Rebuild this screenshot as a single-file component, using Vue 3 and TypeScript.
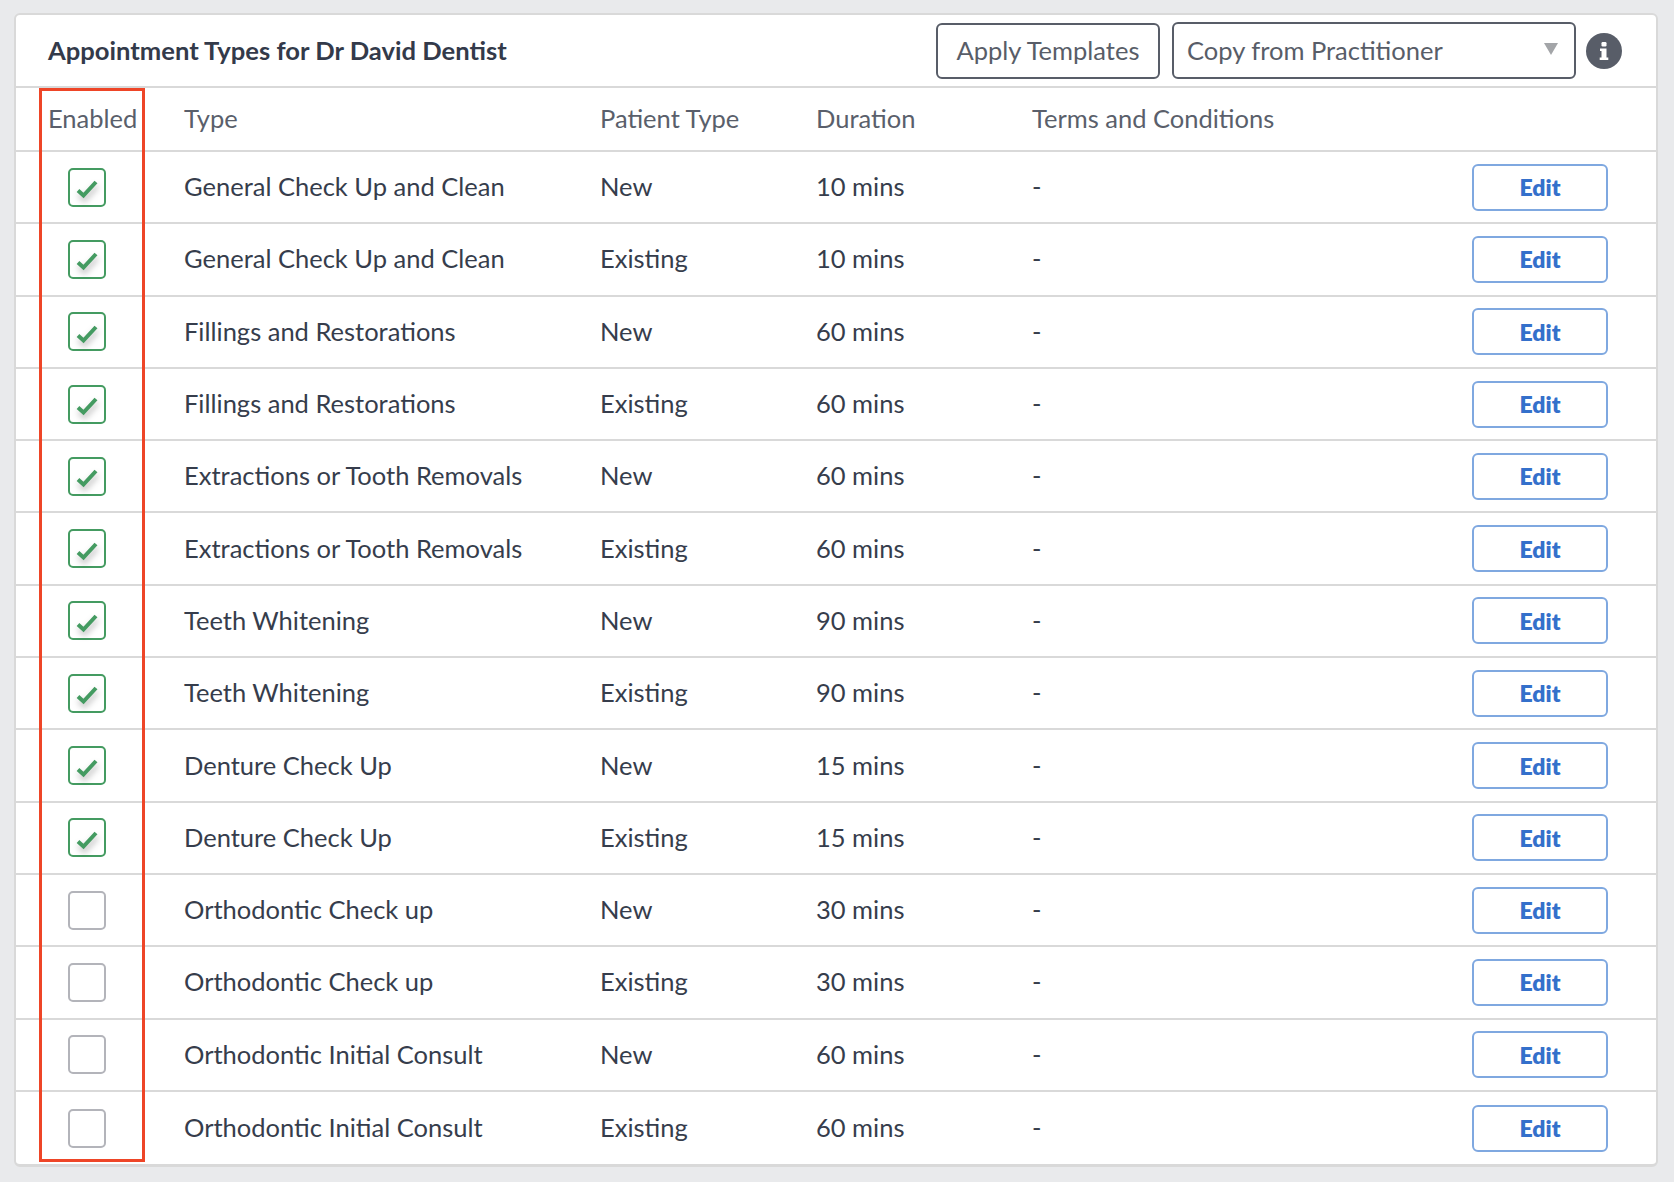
<script setup lang="ts">
interface Row { type: string; patient: string; duration: string; enabled: boolean }
const base: [string, string, boolean][] = [
  ['General Check Up and Clean', '10 mins', true],
  ['Fillings and Restorations', '60 mins', true],
  ['Extractions or Tooth Removals', '60 mins', true],
  ['Teeth Whitening', '90 mins', true],
  ['Denture Check Up', '15 mins', true],
  ['Orthodontic Check up', '30 mins', false],
  ['Orthodontic Initial Consult', '60 mins', false],
]
const rows: Row[] = base.flatMap(([type, duration, enabled]) => [
  { type, patient: 'New', duration, enabled },
  { type, patient: 'Existing', duration, enabled },
])
</script>

<template>
  <div class="page">
    <section class="card">
      <header class="head">
        <h1 class="title">Appointment Types for Dr David Dentist</h1>
        <button class="outline apply" type="button">Apply Templates</button>
        <div class="outline select">
          <span class="select-text">Copy from Practitioner</span>
          <svg class="caret" width="14" height="12" viewBox="0 0 14 12"><path d="M0 0h14L7 12z" fill="#a3a5a8" /></svg>
        </div>
        <svg class="info" width="36" height="36" viewBox="0 0 36 36">
          <circle cx="18" cy="18" r="18" fill="#585d68" />
          <rect x="15.5" y="9" width="5" height="4.5" rx="1.2" fill="#fff" />
          <path d="M14 15.5h6.5v9h1.8V27h-8.6v-2.500h1.800v-6.500H14z" fill="#fff" />
        </svg>
      </header>
      <div class="row labels">
        <div class="cell first">Enabled</div>
        <div class="cell">Type</div>
        <div class="cell">Patient Type</div>
        <div class="cell">Duration</div>
        <div class="cell">Terms and Conditions</div>
      </div>
      <div v-for="(r, i) in rows" :key="i" class="row item">
        <div class="check-cell">
          <span class="box" :class="{ on: r.enabled }">
            <svg v-if="r.enabled" class="tick-icon" width="24" height="24" viewBox="0 0 24 24">
              <path class="tick" d="M3 15.500l5.500 5L21 7" />
            </svg>
          </span>
        </div>
        <div class="cell">{{ r.type }}</div>
        <div class="cell">{{ r.patient }}</div>
        <div class="cell">{{ r.duration }}</div>
        <div class="cell">-</div>
        <button class="edit" type="button">Edit</button>
      </div>
      <div class="highlight"></div>
    </section>
  </div>
</template>

<style scoped>
.page {
  box-sizing: border-box;
  width: 1674px;
  height: 1182px;
  padding: 13px 16px 0 14px;
  background: #e9eaec;
  font-family: Lato, "Liberation Sans", sans-serif;
  color: #363d4c;
}
.card {
  position: relative;
  box-sizing: border-box;
  height: 1154px;
  background: #fff;
  border: 2px solid #d9d9d9;
  border-bottom-width: 3px;
  border-radius: 6px;
}
.head {
  box-sizing: border-box;
  height: 73px;
  display: flex;
  align-items: center;
  padding: 0 34px 0 32px;
  border-bottom: 2px solid #d9d9d9;
}
.title {
  margin: 0 auto 0 0;
  padding-bottom: 2px;
  font-size: 25.6px;
  font-weight: 700;
  color: #333a4a;
}
.outline {
  box-sizing: border-box;
  height: 56px;
  background: #fff;
  border: 2px solid #585d68;
  border-radius: 6px;
  font: inherit;
  font-size: 25.5px;
  color: #585d68;
}
.apply {
  width: 224px;
  padding: 0 0 2px;
  margin-right: 12px;
}
.select {
  width: 404px;
  height: 57px;
  display: flex;
  align-items: center;
  justify-content: space-between;
  padding: 0 16px 0 13px;
  margin-right: 10px;
}
.select-text { padding-bottom: 2px; }
.caret { margin-top: -3px; }
.info { flex: none; }
.row {
  display: grid;
  grid-template-columns: 168px 416px 216px 216px 1fr;
  align-items: center;
  box-sizing: border-box;
  font-size: 25.5px;
}
.cell { padding-bottom: 2px; }
.labels {
  height: 64px;
  border-bottom: 2px solid #d9d9d9;
  color: #5a5f6b;
}
.first { padding-left: 32px; }
.item {
  grid-template-columns: 168px 416px 216px 216px 1fr 136px;
  height: 72.3px;
  padding-right: 48px;
  border-bottom: 2px solid #d9d9d9;
}
.item:nth-last-child(2) { border-bottom: 0; }
.check-cell {
  display: flex;
  padding-left: 52px;
}
.box {
  box-sizing: border-box;
  width: 38px;
  height: 39px;
  display: flex;
  align-items: center;
  justify-content: center;
  border: 2px solid #b3b4ba;
  border-radius: 5px;
}
.box.on { border-color: #449b61; }
.tick-icon {
  overflow: visible;
  filter: drop-shadow(1px 4px 3px rgba(0, 0, 0, 0.28));
}
.tick {
  fill: none;
  stroke: #449b61;
  stroke-width: 4;
}
.edit {
  box-sizing: border-box;
  height: 47px;
  padding: 0;
  background: #fff;
  border: 2.5px solid #7fa8e0;
  border-radius: 6px;
  font: inherit;
  font-size: 23px;
  font-weight: 800;
  color: #3470cb;
}
.highlight {
  position: absolute;
  left: 23px;
  top: 73px;
  width: 106px;
  height: 1074px;
  box-sizing: border-box;
  border: 3px solid #ee4527;
  pointer-events: none;
}
</style>
